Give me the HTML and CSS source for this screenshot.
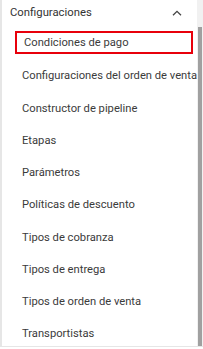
FILE: index.html
```html
<!DOCTYPE html>
<html lang="es">
<head>
<meta charset="utf-8">
<link rel="stylesheet" href="styles.css">
</head>
<body>
<div class="panel">
  <div class="menu">
    <div class="header">
      <span class="title">Configuraciones</span>
      <svg class="chev" width="10" height="6" viewBox="0 0 10 6"><path d="M1 5.2 L5 1.3 L9 5.2" fill="none" stroke="#444" stroke-width="1.3"/></svg>
    </div>
    <ul class="items">
      <li class="item active">Condiciones de pago</li>
      <li class="item">Configuraciones del orden de venta</li>
      <li class="item">Constructor de pipeline</li>
      <li class="item">Etapas</li>
      <li class="item">Parámetros</li>
      <li class="item">Políticas de descuento</li>
      <li class="item">Tipos de cobranza</li>
      <li class="item">Tipos de entrega</li>
      <li class="item">Tipos de orden de venta</li>
      <li class="item">Transportistas</li>
    </ul>
  </div>
  <div class="scrollbar"><div class="thumb"></div></div>
</div>
</body>
</html>
```
FILE: styles.css
```css
html, body {
  margin: 0;
  padding: 0;
  background: #ffffff;
}
body {
  font-family: Roboto, "Liberation Sans", sans-serif;
  width: 203px;
  height: 349px;
  overflow: hidden;
}
.panel {
  display: flex;
  height: 346px;
  border-left: 2px solid #e6e6e6;
  border-bottom: 1px solid #e6e6e6;
}
.menu {
  flex: 1;
  min-width: 0;
  overflow: hidden;
}
.header {
  display: flex;
  align-items: center;
  justify-content: space-between;
  height: 24px;
  padding: 0 15px 0 8px;
}
.title {
  font-size: 11.3px;
  color: #333;
}
.chev {
  margin-top: 1px;
}
.items {
  list-style: none;
  margin: 0;
  padding: 2px 0 0 13px;
}
.item {
  height: 32.25px;
  line-height: 32px;
  padding-left: 7px;
  font-size: 11.2px;
  color: #3b3b3b;
  white-space: nowrap;
  box-sizing: border-box;
}
.item.active {
  height: 23px;
  line-height: 19px;
  border: 2px solid #e8000b;
  width: 178px;
  margin-bottom: 6.25px;
  margin-top: 5px;
}
.scrollbar {
  width: 6px;
  background: #f1f1f1;
  padding-top: 27px;
  padding-left: 1px;
  box-sizing: border-box;
  flex-shrink: 0;
}
.thumb {
  width: 4px;
  height: 100%;
  background: #a0a0a0;
}
```
